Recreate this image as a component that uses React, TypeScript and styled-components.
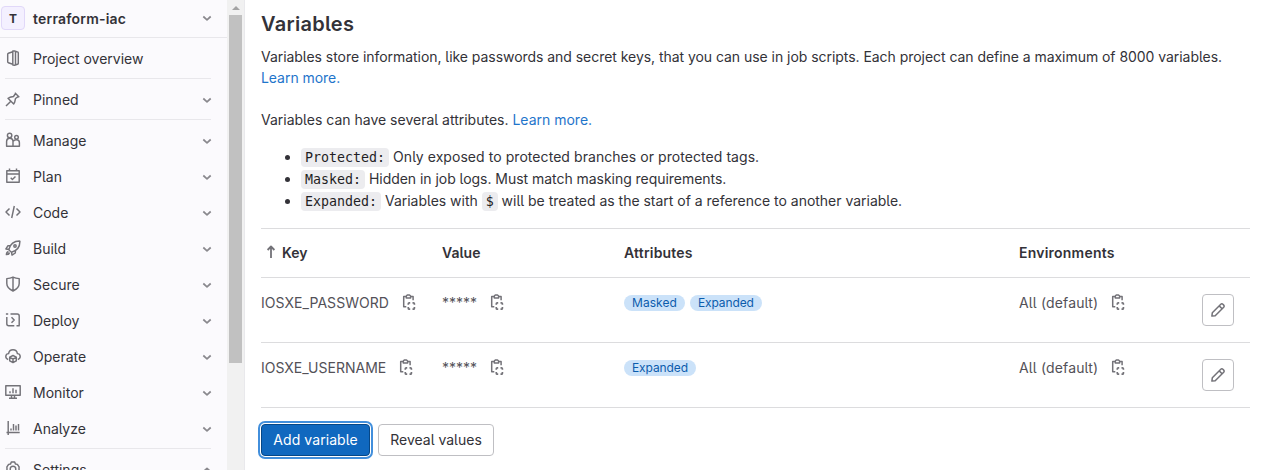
import React from 'react';
import styled, { createGlobalStyle } from 'styled-components';

const GlobalStyle = createGlobalStyle`
  * { box-sizing: border-box; }
  body { margin: 0; background: #fff; overflow: hidden; }
  body, button {
    font-family: Inter, "Noto Sans", sans-serif;
    font-size: 14px;
    font-feature-settings: "cv05";
    color: #333238;
  }
`;

const Page = styled.div`
  display: flex;
  width: 1264px;
  height: 470px;
  overflow: hidden;
`;

const Sidebar = styled.nav`
  flex: none;
  width: 227px;
  height: 470px;
  overflow: hidden;
  background: #fbfafd;
`;

const ProjectHeader = styled.div`
  display: flex;
  align-items: center;
  height: 38px;
  padding: 0 12px 1px 1px;
  margin-bottom: 3px;
  border-bottom: 1px solid #e8e7eb;
`;

const Avatar = styled.span`
  display: grid;
  place-items: center;
  width: 24px;
  height: 24px;
  border: 1px solid #e1d8f9;
  border-radius: 4px;
  background: #f4f0ff;
  font-size: 12px;
  font-weight: 700;
`;

const ProjectName = styled.span`
  flex: 1;
  margin-left: 8px;
  font-weight: 600;
  letter-spacing: 0.2px;
`;

const NavRow = styled.div`
  display: flex;
  align-items: center;
  height: 36px;
  padding: 0 12px 0 5px;
`;

const NavLabel = styled.span`
  flex: 1;
  margin-left: 12px;
  line-height: 20px;
`;

const NavIcon = styled.span`
  display: flex;
  padding-bottom: 2px;
`;

const Separator = styled.div`
  height: 1px;
  margin: 1px 16px 3px 5px;
  background: #e8e7eb;
`;

const ScrollTrack = styled.div`
  flex: none;
  display: flex;
  flex-direction: column;
  width: 18px;
  height: 470px;
  padding-left: 2px;
  background: #f1f1f1;
  border-right: 1px solid #e9e9ec;
`;

const ScrollArrow = styled.div`
  display: grid;
  place-items: center;
  width: 13px;
  height: 15px;
`;

const ScrollThumb = styled.div`
  width: 13px;
  height: 348px;
  background: #c1c1c1;
`;

const Main = styled.main`
  width: 1005px;
  padding: 12px 0 0 16px;
`;

const Title = styled.h1`
  margin: 0 0 10px;
  font-size: 20px;
  line-height: 24px;
  font-weight: 600;
  letter-spacing: 0.28px;
`;

const Paragraph = styled.p<{ $track?: number }>`
  margin: 0 0 21px;
  line-height: 21px;
  letter-spacing: ${(p) => p.$track ?? 0}px;
`;

const Link = styled.a`
  color: #1f75cb;
`;

const AttributeList = styled.ul`
  margin: -5px 0 16px;
  padding-left: 40px;
`;

const AttributeItem = styled.li<{ $track?: number }>`
  height: 22px;
  line-height: 22px;
  letter-spacing: ${(p) => p.$track ?? 0}px;
`;

const Code = styled.code`
  padding: 2px 4px;
  border-radius: 4px;
  background: #ececef;
  color: #1f1e24;
  font-family: "DejaVu Sans Mono", monospace;
  font-size: 13.3px;
  letter-spacing: 0;
`;

const Table = styled.div`
  width: 989px;
  border-top: 1px solid #dcdcde;
`;

const Row = styled.div`
  display: grid;
  grid-template-columns: 181px 182px 395px 183px 32px;
  height: 65px;
  padding-top: 16px;
  border-bottom: 1px solid #dcdcde;
  color: #535158;
`;

const HeadRow = styled(Row)`
  height: 49px;
  padding-top: 15px;
  color: #333238;
  font-weight: 600;
  line-height: 18px;
`;

const HeadCell = styled.div<{ $track?: number; $sorted?: boolean }>`
  display: flex;
  gap: 3px;
  padding-left: ${(p) => (p.$sorted ? 2 : 0)}px;
  letter-spacing: ${(p) => p.$track ?? 0}px;
`;

const Cell = styled.div<{ $track?: number }>`
  display: flex;
  gap: 12px;
  height: 16px;
  align-items: center;
  letter-spacing: ${(p) => p.$track ?? 0}px;
`;

const Badges = styled(Cell)`
  gap: 5px;
  height: 17px;
`;

const Badge = styled.span<{ $track: number }>`
  height: 16px;
  padding: 0 8px;
  border-radius: 8px;
  background: #cbe2f9;
  color: #0b5cad;
  font-size: 12px;
  line-height: 16px;
  letter-spacing: ${(p) => p.$track}px;
`;

const Button = styled.button`
  height: 32px;
  padding: 0;
  border: 1px solid #bfbfc3;
  border-radius: 4px;
  background: #fff;
`;

const EditButton = styled(Button)`
  display: grid;
  place-items: center;
  width: 32px;
`;

const RevealButton = styled(Button)`
  width: 116px;
  padding-bottom: 1px;
`;

const AddButton = styled(Button)`
  width: 109px;
  padding-bottom: 1px;
  border-color: #064787;
  background: #1068bf;
  color: #fff;
  letter-spacing: 0.07px;
  box-shadow: 0 0 0 1px #fff, 0 0 0 3px #428fdc;
`;

const Actions = styled.div`
  display: flex;
  gap: 8px;
  margin-top: 16px;
`;

const glyphs: Record<string, React.ReactNode> = {
  project: (
    <path d="M7.800 1.800 3.400 3.200a1 1 0 0 0-.7 1v7.600a1 1 0 0 0 .7 1L7.800 14.200M7.800 .9v14.200l1.700.100 3-1a1 1 0 0 0 .8-1V2.900a1 1 0 0 0-.8-1L9.500.900zM10.500 1.500v13" />
  ),
  pin: (
    <path d="m1 15 4.600-4.600M9.800 1.700l4.500 4.500M10.600 2.500 8.500 5.500 4.900 6.300 3 7.300 8.700 13l1-1.900.8-3.600 3-2.100z" />
  ),
  users: (
    <>
      <circle cx="4.600" cy="3.400" r="2.200" />
      <circle cx="11.500" cy="5.300" r="1.800" />
      <path d="M1.600 14.200V9.500C1.600 7 2.500 6.200 4.600 6.200S8 7 8 9.500v4.700zM8 14.200h6.400v-3.500c0-2.100-.8-3-2.900-3-1.700 0-2.600.5-3.100 1.600" />
    </>
  ),
  calendar: (
    <path d="M1.800 2.800h12.400v11.500H1.800zM1.800 6h12.400M4.500.5v2.300M11.500.5v2.300M5.700 9.700l1.700 1.700 3.100-3" />
  ),
  code: <path d="M4.500 4.500 1 8l3.500 3.500M11.500 4.500 15 8l-3.500 3.500M9.300 2 6.700 14" />,
  rocket: (
    <>
      <path d="M5 11 3.800 9.500C5 5 8.500 1 14.900 1.100 15 7.500 11 11 6.500 12.200zM5.800 5.500 3 5.700.9 9l3 .5M10.500 10.200l-.2 2.800L7 15.100l-.5-3M3.500 11.500C2 11.800 1.500 13 1.400 14.600 3 14.500 4.200 14 4.500 12.500" />
      <circle cx="10" cy="6" r="1.200" />
    </>
  ),
  shield: (
    <path d="M8 1.100c-2 .9-3.800 1.300-6.200 1.500v5c0 3.400 2.300 5.600 6.200 7.400 3.900-1.800 6.200-4 6.200-7.400v-5C11.800 2.400 10 2 8 1.100zM8 1.100V15" />
  ),
  deploy: (
    <path d="M.9 2h2.300M5.500 2h6.700a2 2 0 0 1 2 2v5.800M1.800 5v6.700a2 2 0 0 0 2 2h5.500M11.500 13.700h3.200M14.200 9.500v4.200M6.500 5.200 9.200 8l-2.700 2.800" />
  ),
  cloud: (
    <>
      <path d="M3.200 11.500C1.700 11 .8 9.900.8 8.500c0-1.700 1.300-2.800 2.800-2.900C4 3.300 5.700 1.800 8 1.800s4 1.500 4.400 3.800c1.500.1 2.800 1.200 2.800 2.900 0 1.400-.9 2.500-2.400 3" />
      <path d="m8 7.500 3.300 1.700v3.600L8 14.500l-3.300-1.700V9.200zM4.700 9.300 8 11l3.300-1.700M8 11v3.500" />
    </>
  ),
  monitor: (
    <path d="M.8 1.800h14.400v9.400H.8zM6.500 11.500V14M9.500 11.500V14M4 14.300h8M5 7.200v2M8 4.200v5M11 5.700v3.500" />
  ),
  chart: <path d="M3.200 1v14M1.500 12.400h13.200M6 8.500v2M8.500 4v6.500M11 5.500v5M13.500 4v6.500" />,
  settings: (
    <>
      <path d="M6.300 1h3.400l.7 2 2 .4 1.700 2.500L14 8l.1 2.100-1.700 2.500-2 .4-.7 2H6.300l-.7-2-2-.4-1.700-2.500L2 8l-.1-2.100 1.700-2.500 2-.4z" />
      <circle cx="8" cy="8" r="2.800" />
    </>
  ),
  down: <path d="m4.300 6.500 3.700 3.300 3.700-3.300" />,
  up: <path d="m4.300 9.700 3.700-3.300 3.700 3.300" />,
  arrow: <path d="M8 14V2.500M4.600 6 8 2.500 11.400 6" strokeWidth="1.800" />,
  copy: (
    <>
      <path d="M5 2.600H2.700v10.200h2.600M9.700 2.600h2.400v3.600M5.300 4V2L6.300 1h2.200l1.100 1v2z" />
      <path d="M9.200 8.800h-.9a1 1 0 0 0-1 1v.9M11.500 8.800h.900a1 1 0 0 1 1 1v.9M7.300 12.900v1.300a1 1 0 0 0 1 1h.9M13.400 12.900v1.300a1 1 0 0 1-1 1h-.9" strokeWidth="1.700" />
    </>
  ),
  pencil: <path d="m1.900 14.100.4-3.300 8.500-8.500c.6-.6 1.500-.6 2.100 0l.8.800c.6.600.6 1.500 0 2.100l-8.500 8.500zM9.200 3.900l2.900 2.900" />,
};

function Icon({ name, color = '#737278', width = 1.5 }: { name: string; color?: string; width?: number }) {
  return (
    <svg width="16" height="16" viewBox="0 0 16 16" fill="none" stroke={color} strokeWidth={width} strokeLinejoin="round">
      {glyphs[name]}
    </svg>
  );
}

function NavItem({ icon, label, chevron = 'down' }: { icon: string; label: string; chevron?: string }) {
  return (
    <NavRow>
      <NavIcon><Icon name={icon} width={1.45} /></NavIcon>
      <NavLabel>{label}</NavLabel>
      {chevron && <Icon name={chevron} color="#89888d" width={1.7} />}
    </NavRow>
  );
}

const sections: [string, string][] = [
  ['users', 'Manage'],
  ['calendar', 'Plan'],
  ['code', 'Code'],
  ['rocket', 'Build'],
  ['shield', 'Secure'],
  ['deploy', 'Deploy'],
  ['cloud', 'Operate'],
  ['monitor', 'Monitor'],
  ['chart', 'Analyze'],
];

const variables = [
  { key: 'IOSXE_PASSWORD', track: 0.05, badges: ['Masked', 'Expanded'] },
  { key: 'IOSXE_USERNAME', track: 0, badges: ['Expanded'] },
];

export default function App() {
  return (
    <Page>
      <GlobalStyle />
      <Sidebar>
        <ProjectHeader>
          <Avatar>T</Avatar>
          <ProjectName>terraform-iac</ProjectName>
          <Icon name="down" color="#89888d" width={1.7} />
        </ProjectHeader>
        <NavItem icon="project" label="Project overview" chevron="" />
        <Separator />
        <NavItem icon="pin" label="Pinned" />
        <Separator />
        {sections.map(([icon, label]) => (
          <NavItem key={label} icon={icon} label={label} />
        ))}
        <Separator />
        <NavItem icon="settings" label="Settings" chevron="up" />
      </Sidebar>
      <ScrollTrack>
        <ScrollArrow>
          <svg width="8" height="4" viewBox="0 0 8 4"><path d="M0 4 4 0l4 4z" fill="#a3a3a3" /></svg>
        </ScrollArrow>
        <ScrollThumb />
      </ScrollTrack>
      <Main>
        <Title>Variables</Title>
        <Paragraph $track={-0.045}>
          Variables store information, like passwords and secret keys, that you can use in job scripts. Each project can define a maximum of 8000 variables.
          <br />
          <Link>Learn more.</Link>
        </Paragraph>
        <Paragraph>
          Variables can have several attributes. <Link>Learn more.</Link>
        </Paragraph>
        <AttributeList>
          <AttributeItem $track={0.06}><Code>Protected:</Code> Only exposed to protected branches or protected tags.</AttributeItem>
          <AttributeItem $track={-0.04}><Code>Masked:</Code> Hidden in job logs. Must match masking requirements.</AttributeItem>
          <AttributeItem $track={-0.015}><Code>Expanded:</Code> Variables with <Code>$</Code> will be treated as the start of a reference to another variable.</AttributeItem>
        </AttributeList>
        <Table>
          <HeadRow>
            <HeadCell $sorted><Icon name="arrow" />Key</HeadCell>
            <HeadCell>Value</HeadCell>
            <HeadCell $track={0.2}>Attributes</HeadCell>
            <HeadCell $track={0.22}>Environments</HeadCell>
          </HeadRow>
          {variables.map((v) => (
            <Row key={v.key}>
              <Cell $track={v.track}>{v.key}<Icon name="copy" /></Cell>
              <Cell>*****<Icon name="copy" /></Cell>
              <Badges>
                {v.badges.map((b) => (
                  <Badge key={b} $track={b === 'Masked' ? 0.05 : -0.1}>{b}</Badge>
                ))}
              </Badges>
              <Cell $track={0.15}>All (default)<Icon name="copy" /></Cell>
              <EditButton><Icon name="pencil" /></EditButton>
            </Row>
          ))}
        </Table>
        <Actions>
          <AddButton>Add variable</AddButton>
          <RevealButton>Reveal values</RevealButton>
        </Actions>
      </Main>
    </Page>
  );
}
